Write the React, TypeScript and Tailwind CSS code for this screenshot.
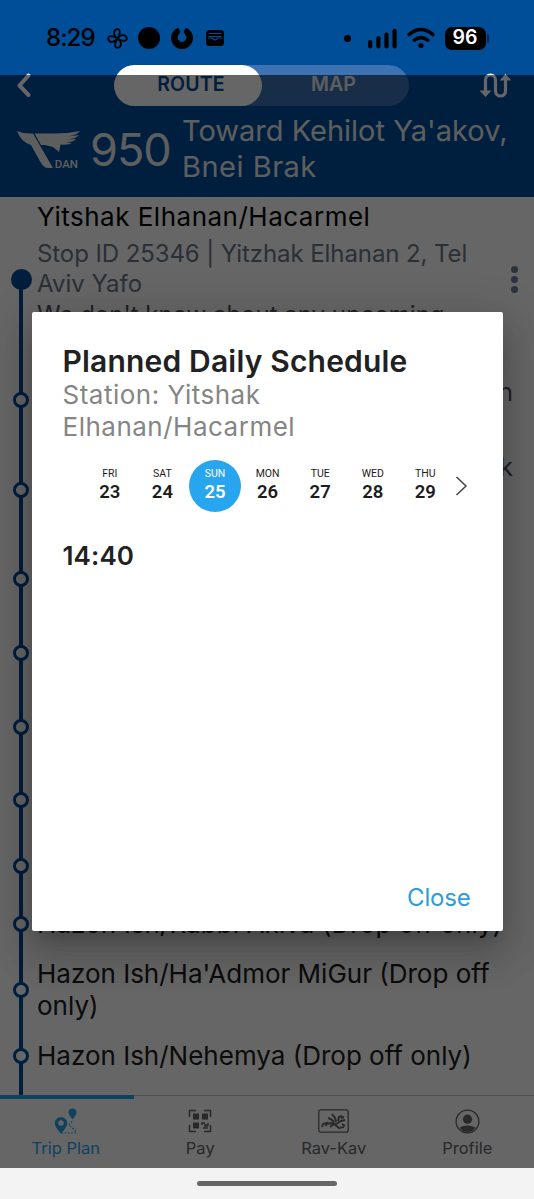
import type { ReactNode } from "react";
import clsx from "clsx";

type Stop = {
  height: string;
  title?: ReactNode;
  edge?: string;
};

const stops: Stop[] = [
  { height: "h-[75px]", edge: "n" },
  { height: "h-[105px]", edge: "k" },
  { height: "h-[74px]" },
  { height: "h-[74px]" },
  { height: "h-[73px]" },
  { height: "h-[73px]" },
  { height: "h-[59px]" },
  { height: "h-[58px]", title: <span className="tracking-[0.08px]">Hazon Ish/Rabbi Akiva (Drop off only)</span> },
  {
    height: "h-[73px]",
    title: (
      <>
        Hazon Ish/Ha'Admor MiGur (Drop off
        <br />
        only)
      </>
    ),
  },
  { height: "h-[59px]", title: "Hazon Ish/Nehemya (Drop off only)" },
];

const days = [
  { name: "FRI", date: 23 },
  { name: "SAT", date: 24 },
  { name: "SUN", date: 25 },
  { name: "MON", date: 26 },
  { name: "TUE", date: 27 },
  { name: "WED", date: 28 },
  { name: "THU", date: 29 },
];

function StatusBar() {
  return (
    <div className="h-[65px] flex items-center justify-between pl-[46px] pr-[45px] pt-[11px]">
      <div className="flex items-center">
        <span className="w-[61px] text-[24px] leading-none font-medium tracking-[-0.9px] whitespace-nowrap">8:29</span>
        <svg width="21" height="21" viewBox="0 0 21 21" fill="none" stroke="currentColor" strokeWidth="1.8" strokeLinejoin="round">
          <path d="M10.5 10.5C6 8 6 2 10 1.2C14 1 13.500 6 10.500 10.500Z" />
          <path d="M10.500 10.500C13 6 19 6 19.800 10C20 14 15 13.500 10.500 10.500Z" />
          <path d="M10.500 10.500C15 13 15 19 11 19.800C7 20 7.500 15 10.500 10.500Z" />
          <path d="M10.500 10.500C8 15 2 15 1.200 11C1 7 6 7.500 10.500 10.500Z" />
        </svg>
        <span className="ml-[10px] size-[22px] rounded-full bg-black" />
        <svg className="ml-[11px]" width="22" height="22" viewBox="0 0 22 22">
          <path d="M7 .8A11 11 0 1 0 15 .8L12.500 5L14.500 8A4.300 4.300 0 1 1 7.500 8L9.500 5Z" fill="currentColor" />
        </svg>
        <svg className="ml-[13px]" width="18" height="16" viewBox="0 0 18 16">
          <rect width="18" height="16" rx="3.5" fill="currentColor" />
          <path d="M2.500 3.500h13M2.500 6.500h13" stroke="#004d98" strokeWidth="1" />
          <path d="M2 8h4.500c1 2.500 4 2.500 5 0H16" fill="none" stroke="#004d98" strokeWidth="1.200" />
        </svg>
      </div>
      <div className="flex items-center">
        <span className="size-[7px] rounded-full bg-black" />
        <svg className="ml-[17px]" width="29" height="21" viewBox="0 0 29 21" stroke="currentColor" strokeWidth="4.200" strokeLinecap="round">
          <path d="M2.200 14v4.500M10.400 10v8.500M18.500 6.500v12M26.600 2.800v15.700" />
        </svg>
        <svg className="ml-[10px]" width="28" height="22" viewBox="0 0 28 22" fill="none" stroke="currentColor" strokeWidth="3.600" strokeLinecap="round">
          <path d="M2.200 7.500Q14-2.500 25.800 7.500M7.300 13.200Q14 8 20.700 13.200" />
          <circle cx="14" cy="18.500" r="2.600" fill="currentColor" stroke="none" />
        </svg>
        <span className="ml-[10px] flex h-[23px] w-[41px] items-center justify-center rounded-[7px] bg-black text-[19.500px] font-semibold leading-none text-white">96</span>
        <span className="ml-[1px] h-[9px] w-[2.500px] rounded-r-full bg-[#00284f]" />
      </div>
    </div>
  );
}

function RouteHeader() {
  return (
    <header className="h-[197px] bg-[#004d98]">
      <StatusBar />
      <div className="flex h-[41px] items-center pl-[16px] pr-[23px]">
        <svg width="16" height="25" viewBox="0 0 16 25" fill="none" stroke="white" strokeWidth="4" strokeLinecap="round" strokeLinejoin="round">
          <path d="M12.500 2.500L3.500 12.500L12.500 22" />
        </svg>
        <div className="ml-[82px] flex h-[41px] w-[295px] rounded-full bg-[#3d72b3] text-[19.500px] font-semibold">
          <span className="flex w-[148px] items-center justify-center rounded-full bg-white pl-[6px] pb-[2px] text-[#004d98] tracking-[0.15px]">ROUTE</span>
          <span className="flex flex-1 items-center justify-center pb-[2px] pr-[4px] text-[#e6eaf0]">MAP</span>
        </div>
        <svg className="ml-auto" width="32" height="26" viewBox="0 0 32 26" fill="none" stroke="white" strokeWidth="3.200">
          <path d="M6.500 19V7a5 5 0 0 1 10 0v11a5 5 0 0 0 10 0V6" />
          <path d="M0.500 17.500h12l-6 6.500zM20.500 7.500h12l-6-6.500z" fill="white" stroke="none" />
        </svg>
      </div>
      <div className="flex h-[91px] text-[#e8eaec]">
        <div className="relative ml-[16px] mt-[24px] h-[40px] w-[65px]">
          <svg width="65" height="40" viewBox="0 0 65 40" fill="currentColor">
            <path d="M1 1Q8 4 17 3.500L37 38H32Q28 38 25 33L15 15Q5 12 1 1Z" />
            <path d="M18.500 3.500H38Q52 3.500 64 1Q61 5 52 6.500L63 5Q60 9 50 9.500L60 9Q56 13 47 12L56 13Q52 15.500 44.500 14.500L43 22L37 17L29 15H25Z" />
          </svg>
          <span className="absolute bottom-[0px] right-[3px] font-['Roboto'] text-[11.500px] font-medium leading-none">DAN</span>
        </div>
        <span className="ml-[9px] mt-[21px] w-[92px] text-[45px] leading-none tracking-[-1px]">950</span>
        <div className="mt-[7px] whitespace-nowrap text-[29px] leading-[36px]">
          <div>Toward Kehilot Ya'akov,</div>
          <div className="tracking-[0.5px]">Bnei Brak</div>
        </div>
      </div>
    </header>
  );
}

function StopMarker({ current }: { current?: boolean }) {
  return (
    <div className="relative flex w-[37px] shrink-0 items-center">
      <span className={clsx("absolute left-[19px] w-[4px] bg-[#004d98]", current ? "top-1/2 bottom-0" : "inset-y-0")} />
      {current ? (
        <span className="relative ml-[11px] size-[21px] rounded-full bg-[#004d98]" />
      ) : (
        <span className="relative ml-[13px] size-[16px] rounded-full border-3 border-[#004d98] bg-white" />
      )}
    </div>
  );
}

function StopList() {
  return (
    <main className="h-[898px] overflow-hidden bg-white text-[26px] text-[#202020]">
      <div className="flex h-[165px]">
        <StopMarker current />
        <div className="flex-1 whitespace-nowrap pt-[4px]">
          <div className="leading-[32px] tracking-[0.5px] text-black">Yitshak Elhanan/Hacarmel</div>
          <div className="mt-[6px] text-[24px] leading-[29.500px] text-[#6b7688]">
            <div className="tracking-[-0.09px]">Stop ID 25346 | Yitzhak Elhanan 2, Tel</div>
            <div>Aviv Yafo</div>
            <div className="pt-[2px] text-[#50545c]">We don't know about any upcoming</div>
          </div>
        </div>
        <div className="flex w-[39px] flex-col items-center justify-center gap-[3px]">
          <span className="size-[7px] rounded-full bg-[#6b7f9c]" />
          <span className="size-[7px] rounded-full bg-[#6b7f9c]" />
          <span className="size-[7px] rounded-full bg-[#6b7f9c]" />
        </div>
      </div>
      {stops.map((stop, i) => (
        <div key={i} className={clsx("flex", stop.height)}>
          <StopMarker />
          {stop.edge ? (
            <div className="flex-1 pr-[21px] pt-[14px] text-right text-[25px] leading-[32px] text-[#50545c]">{stop.edge}</div>
          ) : (
            <div className="flex flex-1 items-center whitespace-nowrap leading-[32px]">
              <div>{stop.title}</div>
            </div>
          )}
        </div>
      ))}
      <div className="flex h-[59px]">
        <StopMarker />
      </div>
    </main>
  );
}

function TripIcon() {
  return (
    <svg width="25" height="27" viewBox="0 0 25 27" fill="currentColor">
      <path fillRule="evenodd" d="M8 9a6.200 6.200 0 0 1 6.200 6.200C14.200 19 10.500 22 8 26C5.500 22 1.800 19 1.800 15.200A6.200 6.200 0 0 1 8 9ZM8 12.300a2.700 2.700 0 1 0 0 5.400a2.700 2.700 0 0 0 0-5.400Z" />
      <path d="M19.500.5a4 4 0 0 1 4 4c0 2.500-2.500 4.500-4 7c-1.500-2.500-4-4.500-4-7a4 4 0 0 1 4-4Z" />
      <path d="M19 13l-3 4l6 5l1 3H9" fill="none" stroke="currentColor" strokeWidth="1.200" strokeDasharray="1.600 1.600" />
    </svg>
  );
}

function PayIcon() {
  return (
    <svg width="24" height="24" viewBox="0 0 24 24" fill="none" stroke="currentColor" strokeWidth="1.500">
      <path d="M1.500 8V1.500H8M16 1.500h6.500V8M1.500 16v6.500H8M16 22.500h6.500V16" />
      <path d="M5 4.500h6v6H5zM14 4.500h6v6H14zM5 13.500h6v6H5z" fill="currentColor" stroke="none" />
      <path d="M14 16v-2h3M15 19h2v-3h3v-2M19 17v3" />
    </svg>
  );
}

function RavKavIcon() {
  return (
    <svg width="31" height="24" viewBox="0 0 31 24" fill="none" stroke="currentColor">
      <rect x=".8" y=".8" width="29.400" height="22.400" rx="2" strokeWidth="1.300" />
      <path d="M4 18l1-3 4-1-1 3M10 15l3-1 5 1 5-3 4-1M12 18l4-3 5 4 5-1M16 13l-3-3-3-1M18 13l-1-4-3-4M20 12l1-4 3-1M23 9l3-1M24 15l3 2" strokeWidth="2" />
    </svg>
  );
}

function ProfileIcon() {
  return (
    <svg width="25" height="25" viewBox="0 0 25 25">
      <circle cx="12.500" cy="12.500" r="11.400" fill="none" stroke="currentColor" strokeWidth="1.300" />
      <circle cx="12.500" cy="10.200" r="4.600" fill="currentColor" />
      <path d="M4.500 18.500Q12.500 14.500 20.500 18.500Q17.500 23 12.500 23T4.500 18.500Z" fill="currentColor" />
    </svg>
  );
}

const tabs = [
  { label: "Trip Plan", icon: <TripIcon />, active: true },
  { label: "Pay", icon: <PayIcon /> },
  { label: "Rav-Kav", icon: <RavKavIcon /> },
  { label: "Profile", icon: <ProfileIcon /> },
];

function TabBar() {
  return (
    <nav className="grid h-[73px] grid-cols-4 bg-white">
      {tabs.map((tab) => (
        <div
          key={tab.label}
          className={clsx(
            "flex flex-col items-center",
            tab.active ? "border-t-4 border-[#27a5ee] pr-[2px] text-[#27a5ee]" : "border-t border-[#c8c8c8] pt-[3px] text-[#666]"
          )}
        >
          <div className="flex h-[37px] items-center pt-[7px]">{tab.icon}</div>
          <span className="text-[16.500px] leading-[24px]">{tab.label}</span>
        </div>
      ))}
    </nav>
  );
}

function ScheduleDialog() {
  return (
    <section className="flex h-[619px] w-[471px] flex-col rounded-[2px] bg-white pl-[31px] pr-[32px] pt-[32px] shadow-[0_11px_15px_-7px_rgba(0,0,0,0.2),0_24px_38px_3px_rgba(0,0,0,0.14),0_9px_46px_8px_rgba(0,0,0,0.12)]">
      <h2 className="whitespace-nowrap text-[30px] font-semibold leading-[34px] tracking-[0.18px] text-[#212121]">Planned Daily Schedule</h2>
      <div className="mt-[1px] whitespace-nowrap text-[26px] leading-[32px] tracking-[0.5px] text-[#858585]">
        <div>Station: Yitshak</div>
        <div>Elhanan/Hacarmel</div>
      </div>
      <div className="mt-[17px] flex items-center pl-[21px] font-['Roboto',sans-serif]">
        {days.map((day) => (
          <div key={day.date} className="flex w-[52.600px] justify-center">
            <div
              className={clsx(
                "flex size-[52px] shrink-0 flex-col items-center rounded-full pt-[7px]",
                day.name === "SUN" ? "bg-[#27a5ee] text-white" : "text-[#1c1c1c]"
              )}
            >
              <span className="text-[10.500px] leading-[13px]">{day.name}</span>
              <span className="text-[18.500px] font-semibold leading-[24px]">{day.date}</span>
            </div>
          </div>
        ))}
        <svg className="ml-[3px] shrink-0" width="13" height="20" viewBox="0 0 13 20" fill="none" stroke="#444" strokeWidth="1.500">
          <path d="M1.500 1L11 10L1.500 19" />
        </svg>
      </div>
      <div className="mt-[28px] text-[26px] font-semibold leading-[32px] tracking-[0.1px] text-[#212121]">14:40</div>
      <button type="button" className="mb-[17px] mt-auto self-end text-[24px] leading-[32px] tracking-[-0.2px] text-[#2c9cdb]">
        Close
      </button>
    </section>
  );
}

export default function App() {
  return (
    <div className="relative h-[1199px] w-[534px] overflow-hidden bg-[#f3f3f3] font-['Inter',sans-serif]">
      <RouteHeader />
      <StopList />
      <TabBar />
      <div className="flex h-[31px] justify-center pt-[13px]">
        <div className="h-[5px] w-[140px] rounded-full bg-[#666]" />
      </div>

      {/* Backdrop leaves the system bars uncovered */}
      <div className="absolute inset-x-0 bottom-[31px] top-[75px] flex items-center justify-center overflow-hidden bg-black/60">
        <ScheduleDialog />
      </div>
    </div>
  );
}
